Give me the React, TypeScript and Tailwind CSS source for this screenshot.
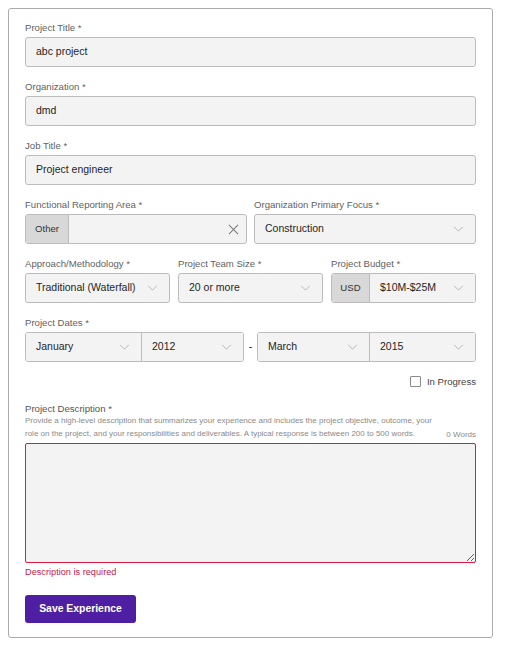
import React from "react";

const font = { fontFamily: '"Liberation Sans", Arial, sans-serif' };

function Chevron() {
  return (
    <svg viewBox="0 0 12 7" className="h-[6px] w-[11px] shrink-0" fill="none" aria-hidden="true">
      <path d="M1 1l5 5 5-5" stroke="#ababab" strokeWidth="1" />
    </svg>
  );
}

function IconX() {
  return (
    <svg viewBox="0 0 12 12" className="h-[11px] w-[11px]" fill="none" aria-hidden="true">
      <path d="M1 1l10 10M11 1 1 11" stroke="#7a7a7a" strokeWidth="1.1" />
    </svg>
  );
}

function Label({ children }: { children: React.ReactNode }) {
  return <div className="mb-[4px] text-[9.6px] leading-[11px] text-[#5f5f5f]">{children}</div>;
}

function TextField({ label, value }: { label: string; value: string }) {
  return (
    <div>
      <Label>{label}</Label>
      <div className="flex h-[30px] items-center rounded-[3px] border border-[#bcbcbc] bg-[#f3f3f3] px-[10px] text-[10.5px] text-[#1f1f1f]">
        {value}
      </div>
    </div>
  );
}

function SelectBox({ value, className = "" }: { value: string; className?: string }) {
  return (
    <div
      className={
        "flex h-[30px] min-w-0 items-center justify-between bg-[#f3f3f3] pl-[10px] pr-[11px] text-[10.5px] text-[#1f1f1f] " +
        className
      }
    >
      <span className="whitespace-nowrap">{value}</span>
      <Chevron />
    </div>
  );
}

export default function App() {
  return (
    <div style={font} className="min-h-[651px] bg-white pl-[8px] pt-[8px]">
      <div className="w-[485px] rounded-[3px] border border-[#ababab] px-[16px] pb-[14px] pt-[13px]">
        <div className="flex flex-col gap-[14px]">
          <TextField label="Project Title *" value="abc project" />
          <TextField label="Organization *" value="dmd" />
          <TextField label="Job Title *" value="Project engineer" />

          <div className="grid grid-cols-2 gap-[7px]">
            <div>
              <Label>Functional Reporting Area *</Label>
              <div className="flex h-[30px] overflow-hidden rounded-[3px] border border-[#bcbcbc] bg-[#f3f3f3] text-[10.5px] text-[#222]">
                <span className="flex w-[43px] items-center justify-center border-r border-[#bcbcbc] bg-[#d8d8d8] text-[9.6px] text-[#333]">
                  Other
                </span>
                <span className="flex flex-1 items-center justify-end pr-[7px]">
                  <IconX />
                </span>
              </div>
            </div>
            <div>
              <Label>Organization Primary Focus *</Label>
              <SelectBox value="Construction" className="rounded-[3px] border border-[#bcbcbc]" />
            </div>
          </div>

          <div className="grid grid-cols-3 gap-[8px]">
            <div>
              <Label>Approach/Methodology *</Label>
              <SelectBox value="Traditional (Waterfall)" className="rounded-[3px] border border-[#bcbcbc]" />
            </div>
            <div>
              <Label>Project Team Size *</Label>
              <SelectBox value="20 or more" className="rounded-[3px] border border-[#bcbcbc]" />
            </div>
            <div>
              <Label>Project Budget *</Label>
              <div className="flex h-[30px] overflow-hidden rounded-[3px] border border-[#bcbcbc]">
                <span className="flex w-[38px] shrink-0 items-center justify-center border-r border-[#bcbcbc] bg-[#d8d8d8] text-[9.6px] text-[#333]">
                  USD
                </span>
                <SelectBox value="$10M-$25M" className="h-auto flex-1" />
              </div>
            </div>
          </div>

          <div>
            <Label>Project Dates *</Label>
            <div className="flex items-center">
              <div className="flex h-[30px] w-[219px] overflow-hidden rounded-[3px] border border-[#bcbcbc]">
                <SelectBox value="January" className="h-auto w-[116px] border-r border-[#bcbcbc]" />
                <SelectBox value="2012" className="h-auto flex-1" />
              </div>
              <span className="w-[13px] text-center text-[10.5px] text-[#222]">-</span>
              <div className="flex h-[30px] w-[219px] overflow-hidden rounded-[3px] border border-[#bcbcbc]">
                <SelectBox value="March" className="h-auto w-[112px] border-r border-[#bcbcbc]" />
                <SelectBox value="2015" className="h-auto flex-1" />
              </div>
            </div>
            <div className="mt-[14px] flex items-center justify-end gap-[6px]">
              <span className="h-[11px] w-[11px] rounded-[1px] border border-[#8a8a8a] bg-white" />
              <span className="text-[9.6px] leading-[11px] text-[#444]">In Progress</span>
            </div>
          </div>
        </div>

        <div className="mt-[16px]">
          <div className="text-[9.6px] leading-[11px] text-[#555]">Project Description *</div>
          <div className="flex items-end justify-between">
            <p className="whitespace-nowrap text-[8px] leading-[13px] text-[#8a8a8a]">
              Provide a high-level description that summarizes your experience and includes the project objective, outcome, your
              <br />
              role on the project, and your responsibilities and deliverables. A typical response is between 200 to 500 words.
            </p>
            <span className="text-[8px] leading-[11px] text-[#8a8a8a]">0 Words</span>
          </div>
          <textarea
            className="mt-[3px] block h-[120px] w-full rounded-[2px] border border-[#e5163f] bg-[#f3f3f3] outline-none"
            defaultValue=""
          />
          <div className="mt-[4px] text-[9.2px] leading-[11px] text-[#c4194a]">Description is required</div>
        </div>

        <button className="mt-[17px] h-[28px] w-[111px] rounded-[3px] bg-[#4f1fa3] text-[10.4px] font-bold text-white">
          Save Experience
        </button>
      </div>
    </div>
  );
}
